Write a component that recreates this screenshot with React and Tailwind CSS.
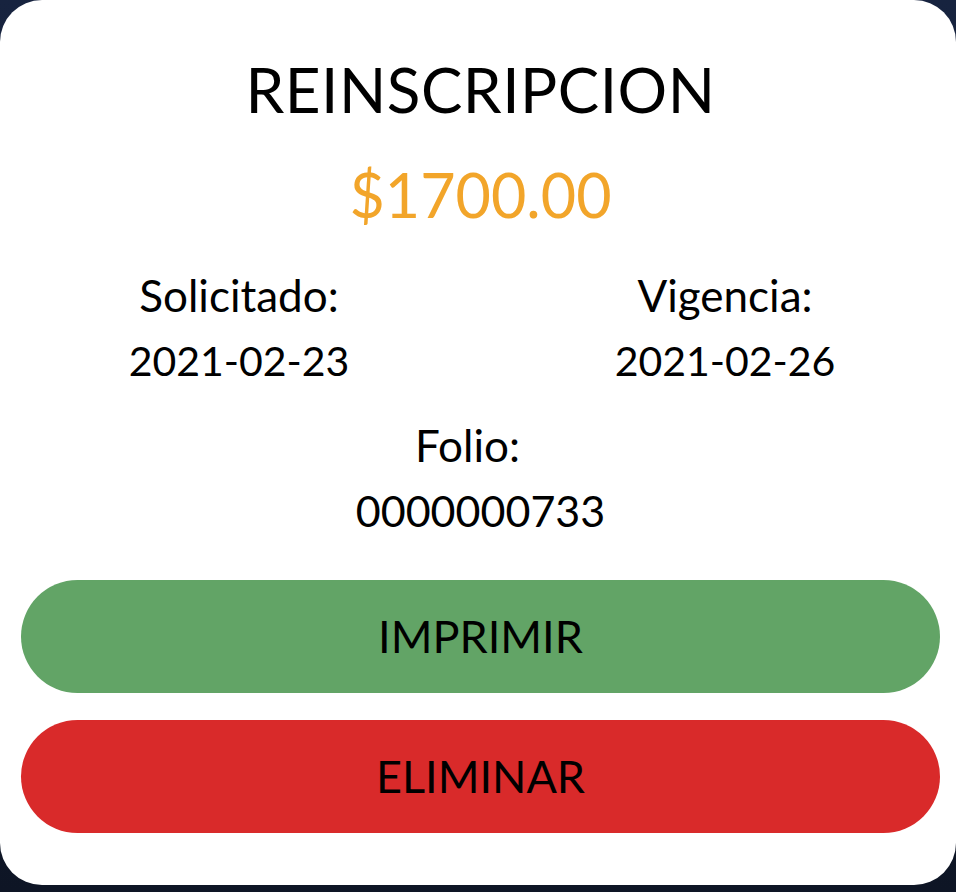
import React from 'react';

const InfoItem = ({ label, value, labelClass = '', valueClass = 'text-[41px]' }) => (
  <div className="flex flex-col items-center w-[300px]">
    <span className={`text-[44px] leading-[66px] ${labelClass}`}>{label}</span>
    <span className={`leading-[66px] ${valueClass}`}>{value}</span>
  </div>
);

const App = () => {
  return (
    <div className="min-h-[892px] w-[956px] bg-gradient-to-b from-[#17233f] to-[#0e1525] font-['Lato','Noto_Sans',sans-serif] text-black">
      <div className="bg-white rounded-[42px] h-[885px] pl-[21px] pr-[16px] pt-[50px] flex flex-col items-center">
        <h1 className="text-[62px] leading-[78px] tracking-[0.5px]">REINSCRIPCION</h1>
        <p className="text-[61px] leading-[70px] mt-[32px] text-[#f2a52a]">$1700.00</p>

        <div className="flex gap-[186px] mt-[32px] ml-[3px]">
          <InfoItem label="Solicitado:" value="2021-02-23" />
          <InfoItem label="Vigencia:" value="2021-02-26" />
        </div>

        <div className="mt-[18px]">
          <InfoItem
            label="Folio:"
            value="0000000733"
            labelClass="pr-[26px]"
            valueClass="text-[43px]"
          />
        </div>

        <div className="w-full flex flex-col gap-[27px] mt-[36px]">
          <button className="w-full h-[113px] rounded-full bg-[#62a466] text-[45px]">
            IMPRIMIR
          </button>
          <button className="w-full h-[113px] rounded-full bg-[#d92a2a] text-[45px]">
            ELIMINAR
          </button>
        </div>
      </div>
    </div>
  );
};

export default App;
